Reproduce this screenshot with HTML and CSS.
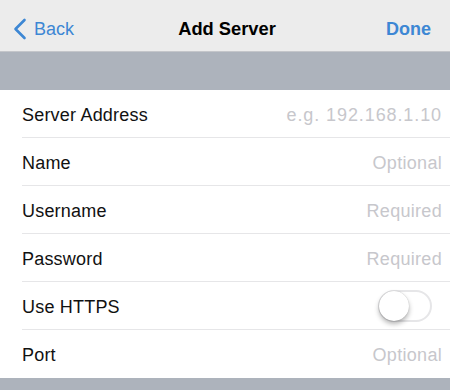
FILE: index.html
```html
<!DOCTYPE html>
<html lang="en">
<head>
    <meta charset="UTF-8">
    <title>Add Server</title>
    <link rel="stylesheet" href="styles.css">
</head>
<body>

    <!-- Навигация -->
    <header class="navbar">
        <a href="#" class="nav-back">
            <svg class="chevron" width="14" height="22" viewBox="0 0 14 22">
                <polyline points="11.5,2 2.5,11 11.5,20" fill="none" stroke="#3d87d4" stroke-width="2.6" stroke-linecap="round" stroke-linejoin="round"/>
            </svg>
            <span>Back</span>
        </a>
        <h1 class="nav-title">Add Server</h1>
        <a href="#" class="nav-done">Done</a>
    </header>

    <div class="band"></div>

    <!-- Форма -->
    <form class="table">
        <div class="row">
            <div class="row-inner">
                <label>Server Address</label>
                <input type="text" class="wide" placeholder="e.g. 192.168.1.10">
            </div>
        </div>
        <div class="row">
            <div class="row-inner">
                <label>Name</label>
                <input type="text" placeholder="Optional">
            </div>
        </div>
        <div class="row">
            <div class="row-inner">
                <label>Username</label>
                <input type="text" placeholder="Required">
            </div>
        </div>
        <div class="row">
            <div class="row-inner">
                <label>Password</label>
                <input type="password" placeholder="Required">
            </div>
        </div>
        <div class="row">
            <div class="row-inner">
                <label>Use HTTPS</label>
                <span class="switch"><span class="knob"></span></span>
            </div>
        </div>
        <div class="row last">
            <div class="row-inner">
                <label>Port</label>
                <input type="text" placeholder="Optional">
            </div>
        </div>
    </form>

    <div class="band bottom"></div>

</body>
</html>
```

FILE: styles.css
```css
* {
    box-sizing: border-box;
    margin: 0;
    padding: 0;
}

body {
    font-family: 'Liberation Sans', Arial, sans-serif;
    background-color: #adb3bc;
    color: #111;
    width: 450px;
    height: 390px;
    overflow: hidden;
}

/* Навбар */
.navbar {
    height: 52px;
    padding-top: 7px;
    background-color: #ececec;
    border-bottom: 1px solid #c4c6ca;
    display: flex;
    align-items: center;
    justify-content: space-between;
    padding-left: 13px;
    padding-right: 19px;
}

.nav-back {
    display: flex;
    align-items: center;
    gap: 7px;
    color: #3d87d4;
    text-decoration: none;
    font-size: 18px;
    width: 100px;
}

.chevron {
    display: block;
}

.nav-title {
    font-size: 18.3px;
    font-weight: bold;
    color: #000;
}

.nav-done {
    width: 90px;
    text-align: right;
    color: #3d87d4;
    text-decoration: none;
    font-size: 18px;
    font-weight: bold;
}

/* Серые полосы */
.band {
    height: 38px;
    background-color: #adb3bc;
}

.band.bottom {
    height: 12px;
}

/* Таблица */
.table {
    background-color: #fff;
}

.row {
    padding-left: 22px;
}

.row-inner {
    height: 48px;
    padding-top: 3px;
    display: flex;
    align-items: center;
    justify-content: space-between;
    padding-right: 8px;
    border-bottom: 1px solid #e6e6e8;
}

.row.last .row-inner {
    border-bottom: none;
}

.row label {
    font-size: 18px;
    color: #111;
    letter-spacing: 0.2px;
}

.row input {
    border: none;
    outline: none;
    background: transparent;
    text-align: right;
    font-family: 'Liberation Sans', Arial, sans-serif;
    font-size: 18px;
    width: 220px;
    color: #111;
}

.row input::placeholder {
    color: #c7c7cc;
    letter-spacing: 0.3px;
}

.row input.wide::placeholder {
    letter-spacing: 0.9px;
}

/* Переключатель */
.switch {
    position: relative;
    width: 54px;
    height: 32px;
    margin-right: 10px;
    margin-top: -3px;
    border-radius: 16px;
    border: 2px solid #e6e6e8;
    background-color: #fff;
}

.knob {
    position: absolute;
    left: -1px;
    top: -1px;
    width: 30px;
    height: 30px;
    border-radius: 50%;
    background-color: #fff;
    box-shadow: 0 3px 5px rgba(0, 0, 0, 0.3), 0 0 1px rgba(0, 0, 0, 0.25);
}
```
